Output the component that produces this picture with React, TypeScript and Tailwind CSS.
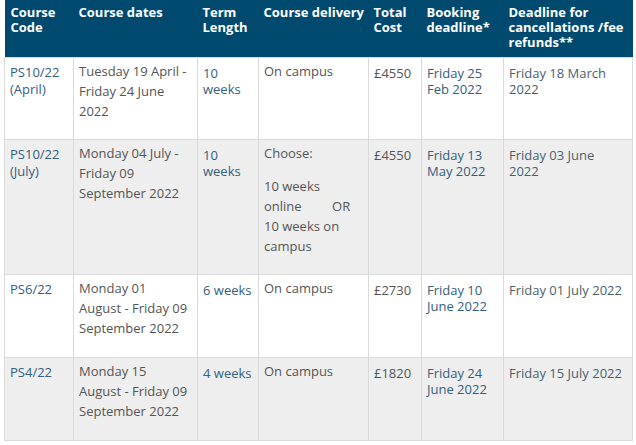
import React from "react";

const BLUE = "text-[#32607f]";
const GRAY = "text-[#555555]";

type Row = {
  code: React.ReactNode;
  dates: React.ReactNode;
  term: React.ReactNode;
  delivery: React.ReactNode;
  cost: string;
  booking: React.ReactNode;
  cancel: React.ReactNode;
  h: string;
  bg: string;
};

const rows: Row[] = [
  {
    code: <>PS10/22<br />(April)</>,
    dates: <>Tuesday 19 April -<br />Friday 24 June<br />2022</>,
    term: <>10<br />weeks</>,
    delivery: <>On campus</>,
    cost: "£4550",
    booking: <>Friday 25<br />Feb 2022</>,
    cancel: <>Friday 18 March<br />2022</>,
    h: "h-[82px]",
    bg: "bg-white",
  },
  {
    code: <>PS10/22<br />(July)</>,
    dates: <>Monday 04 July -<br />Friday 09<br />September 2022</>,
    term: <>10<br />weeks</>,
    delivery: (
      <>
        <div className="mb-[13px]">Choose:</div>
        <div>
          10 weeks<br />online&nbsp;&nbsp;&nbsp;&nbsp;&nbsp;&nbsp;&nbsp;&nbsp;&nbsp;OR<br />10 weeks on<br />campus
        </div>
      </>
    ),
    cost: "£4550",
    booking: <>Friday 13<br />May 2022</>,
    cancel: <>Friday 03 June<br />2022</>,
    h: "h-[135px]",
    bg: "bg-[#eeeeee]",
  },
  {
    code: <>PS6/22</>,
    dates: <>Monday 01<br />August - Friday 09<br />September 2022</>,
    term: <>6 weeks</>,
    delivery: <>On campus</>,
    cost: "£2730",
    booking: <>Friday 10<br />June 2022</>,
    cancel: <>Friday 01 July 2022</>,
    h: "h-[83px]",
    bg: "bg-white",
  },
  {
    code: <>PS4/22</>,
    dates: <>Monday 15<br />August - Friday 09<br />September 2022</>,
    term: <>4 weeks</>,
    delivery: <>On campus</>,
    cost: "£1820",
    booking: <>Friday 24<br />June 2022</>,
    cancel: <>Friday 15 July 2022</>,
    h: "h-[83px]",
    bg: "bg-[#eeeeee]",
  },
];

const td = "align-top border border-[#dadada] pl-[5px] pr-[4px]";

export default function App() {
  return (
    <div
      className="w-[636px] h-[445px] bg-white overflow-hidden pl-[4px]"
      style={{ fontFamily: '"Open Sans", "Liberation Sans", sans-serif' }}
    >
      <table className="table-fixed border-collapse w-[628px] text-[13px]">
        <colgroup>
          <col className="w-[69px]" />
          <col className="w-[124px]" />
          <col className="w-[61px]" />
          <col className="w-[110px]" />
          <col className="w-[53px]" />
          <col className="w-[82px]" />
          <col className="w-[129px]" />
        </colgroup>
        <thead>
          <tr className="h-[57px] bg-[#004a6f] text-white font-bold leading-[15px] text-left">
            <th className="align-top pl-[6px] pt-[5px]">Course Code</th>
            <th className="align-top pl-[5px] pt-[5px]">Course dates</th>
            <th className="align-top pl-[5px] pt-[5px]">Term Length</th>
            <th className="align-top pl-[5px] pt-[5px]">Course delivery</th>
            <th className="align-top pl-[5px] pt-[5px]">Total Cost</th>
            <th className="align-top pl-[5px] pt-[5px]">Booking deadline*</th>
            <th className="align-top pl-[5px] pt-[5px] pr-[2px]">Deadline for cancellations /fee refunds**</th>
          </tr>
        </thead>
        <tbody>
          {rows.map((r, i) => (
            <tr key={i} className={`${r.h} ${r.bg}`}>
              <td className={`${td} ${BLUE} leading-[17px] pt-[6px]`}>{r.code}</td>
              <td className={`${td} ${GRAY} leading-[20px] pt-[3px]`}>{r.dates}</td>
              <td className={`${td} ${BLUE} leading-[16px] pt-[7px]`}>{r.term}</td>
              <td className={`${td} ${GRAY} leading-[20px] pt-[3px]`}>{r.delivery}</td>
              <td className={`${td} ${GRAY} leading-[16px] pt-[7px]`}>{r.cost}</td>
              <td className={`${td} ${BLUE} leading-[16px] pt-[7px]`}>{r.booking}</td>
              <td className={`${td} text-[#4a5f6e] leading-[16px] pt-[7px]`}>{r.cancel}</td>
            </tr>
          ))}
        </tbody>
      </table>
    </div>
  );
}
